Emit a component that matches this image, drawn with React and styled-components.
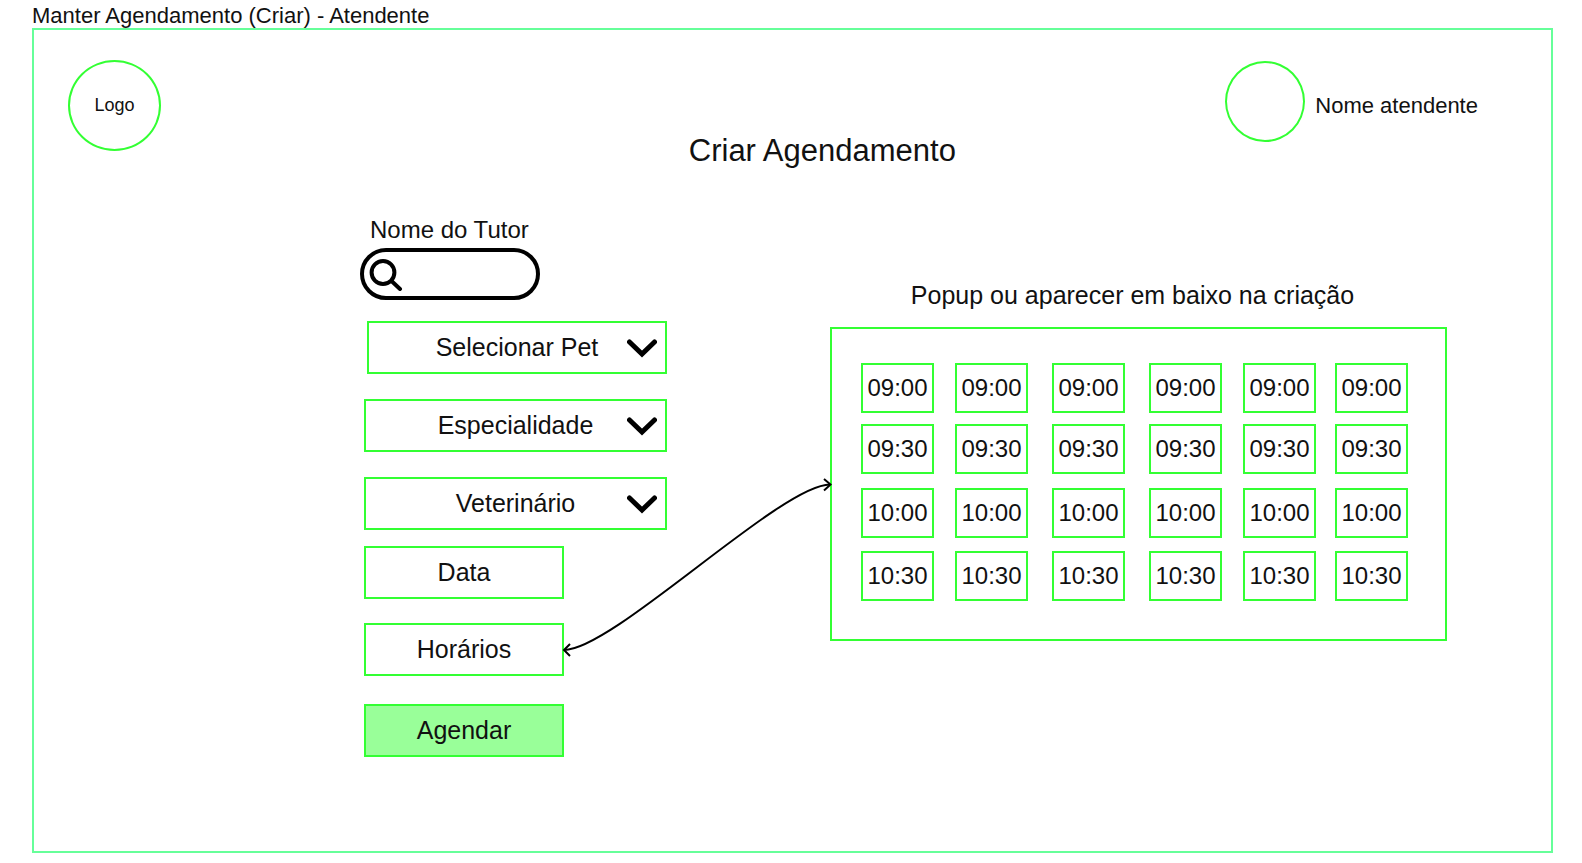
import React from "react";
import styled, { createGlobalStyle } from "styled-components";

const GlobalStyle = createGlobalStyle`
  *, *::before, *::after { box-sizing: border-box; }
  body {
    margin: 0;
    background: #fff;
    color: #111;
    font-family: "Liberation Sans", Arial, sans-serif;
    font-size: 24px;
    line-height: 28px;
  }
  button, input, select { font: inherit; color: inherit; }
`;

const GREEN = "#33ff33";

const Page = styled.div`
  padding: 0 29px 10px 32px;
`;

const PageTitle = styled.p`
  margin: 0;
  padding-top: 4px;
  font-size: 22px;
  line-height: 24px;
`;

const Frame = styled.main`
  min-height: calc(100vh - 38px);
  border: 2px solid #66ff99;
`;

const Header = styled.header`
  display: grid;
  grid-template-columns: 44% 19% 37%;
  align-items: start;
  padding: 30px 73px 0 34px;
`;

const Circle = styled.div`
  flex: none;
  display: flex;
  align-items: center;
  justify-content: center;
  width: ${(p) => p.$width}px;
  height: ${(p) => p.$height}px;
  padding-bottom: 2px;
  border: 2px solid ${GREEN};
  border-radius: 50%;
  font-size: 18px;
`;

const Heading = styled.h1`
  margin: 0;
  padding-top: 73px;
  font-size: 31px;
  font-weight: 400;
  line-height: 36px;
  text-align: center;
  white-space: nowrap;
`;

const User = styled.div`
  display: flex;
  justify-content: flex-end;
  gap: 10px;
  padding-top: 1px;
  font-size: 22px;
`;

const UserName = styled.span`
  line-height: 89px;
  white-space: nowrap;
`;

const Workspace = styled.div`
  display: flex;
  gap: 163px;
  padding: 47px 104px 48px 326px;

  @media (max-width: 1300px) {
    flex-direction: column;
    gap: 48px;
    padding: 48px;
  }
`;

const Form = styled.form`
  position: relative;
  flex: none;
  width: 307px;
`;

const SearchLabel = styled.label`
  display: block;
  padding-left: 10px;
`;

const SearchBox = styled.div`
  display: flex;
  align-items: center;
  width: 180px;
  height: 52px;
  margin-top: 4px;
  padding: 0 16px 0 5px;
  border: 4px solid #000;
  border-radius: 26px;
`;

const SearchInput = styled.input`
  flex: 1;
  min-width: 0;
  border: 0;
  outline: 0;
  background: none;
`;

const FieldGroup = styled.div`
  display: flex;
  flex-direction: column;
  align-items: ${(p) => p.$align};
  gap: ${(p) => p.$gap}px;
  margin-top: ${(p) => p.$top}px;
  padding-left: 4px;
  font-size: 25px;
`;

const SelectWrap = styled.div`
  position: relative;
  width: ${(p) => p.$width}px;
`;

const Select = styled.select`
  appearance: none;
  display: block;
  width: 100%;
  height: 53px;
  padding: 0 0 2px;
  border: 2px solid ${GREEN};
  border-radius: 0;
  background: #fff;
  text-align: center;
  text-align-last: center;
`;

const Chevron = styled.svg`
  position: absolute;
  top: 18px;
  right: 10px;
  pointer-events: none;
`;

const Action = styled.button`
  width: 200px;
  height: 53px;
  padding: 0 0 2px;
  border: 2px solid ${GREEN};
  background: ${(p) => (p.$filled ? "#99ff99" : "#fff")};
`;

const Connector = styled.svg`
  position: absolute;
  top: 260px;
  left: 200px;
  pointer-events: none;

  @media (max-width: 1300px) {
    display: none;
  }
`;

const Popup = styled.section`
  flex: 1;
  min-width: 0;
  padding-top: 65px;
`;

const PopupTitle = styled.h2`
  margin: 0 0 18px;
  padding-right: 12px;
  font-size: 25px;
  font-weight: 400;
  line-height: 28px;
  text-align: center;
`;

const Slots = styled.div`
  display: grid;
  grid-template-columns: 94fr 97fr 97fr 94fr 92fr 73px;
  grid-template-rows: 61px 64px 63px 50px;
  align-items: start;
  padding: 34px 37px 38px 29px;
  border: 2px solid ${GREEN};
`;

const Slot = styled.button`
  width: 73px;
  height: 50px;
  padding: 0;
  border: 2px solid ${GREEN};
  background: #fff;
`;

const SELECTS = [
  { id: "pet", label: "Selecionar Pet", width: 300 },
  { id: "especialidade", label: "Especialidade", width: 303 },
  { id: "veterinario", label: "Veterinário", width: 303 },
];

const TIMES = ["09:00", "09:30", "10:00", "10:30"];
const COLUMNS = [1, 2, 3, 4, 5, 6];

export default function App() {
  return (
    <>
      <GlobalStyle />
      <Page>
        <PageTitle>Manter Agendamento (Criar) - Atendente</PageTitle>
        <Frame>
          <Header>
            <Circle $width={93} $height={91}>Logo</Circle>
            <Heading>Criar Agendamento</Heading>
            <User>
              <Circle $width={80} $height={81} />
              <UserName>Nome atendente</UserName>
            </User>
          </Header>

          <Workspace>
            <Form onSubmit={(e) => e.preventDefault()}>
              <SearchLabel htmlFor="tutor">Nome do Tutor</SearchLabel>
              <SearchBox>
                <svg width="34" height="34" viewBox="0 0 34 34" fill="none" stroke="#000" strokeWidth="4" aria-hidden="true">
                  <circle cx="14" cy="15.5" r="11.4" />
                  <path d="M22.5 24 L31 32" strokeLinecap="round" />
                </svg>
                <SearchInput id="tutor" type="search" />
              </SearchBox>

              <FieldGroup $align="flex-end" $gap={25} $top={21}>
                {SELECTS.map((s) => (
                  <SelectWrap key={s.id} $width={s.width}>
                    <Select id={s.id} aria-label={s.label}>
                      <option>{s.label}</option>
                    </Select>
                    <Chevron width="30" height="20" viewBox="0 0 30 20" fill="none" stroke="#000" strokeWidth="5" strokeLinecap="round" aria-hidden="true">
                      <path d="M2.5 3 L15 15 L27.5 3" />
                    </Chevron>
                  </SelectWrap>
                ))}
              </FieldGroup>

              <FieldGroup $align="flex-start" $gap={24} $top={16}>
                <Action type="button">Data</Action>
                <Action type="button">Horários</Action>
              </FieldGroup>

              <FieldGroup $align="flex-start" $gap={24} $top={28}>
                <Action type="submit" $filled>Agendar</Action>
              </FieldGroup>

              <Connector width="274" height="184" viewBox="560 476 274 184" fill="none" stroke="#000" strokeWidth="2" aria-hidden="true">
                <path d="M564 650 C613 650 781 484.5 830 484.5" />
                <path d="M570 644 L564 650 L570 656" />
                <path d="M824 479 L830.5 484.5 L824 490.5" />
              </Connector>
            </Form>

            <Popup>
              <PopupTitle>Popup ou aparecer em baixo na criação</PopupTitle>
              <Slots>
                {TIMES.map((time) =>
                  COLUMNS.map((column) => (
                    <Slot key={`${time}-${column}`} type="button">{time}</Slot>
                  ))
                )}
              </Slots>
            </Popup>
          </Workspace>
        </Frame>
      </Page>
    </>
  );
}
